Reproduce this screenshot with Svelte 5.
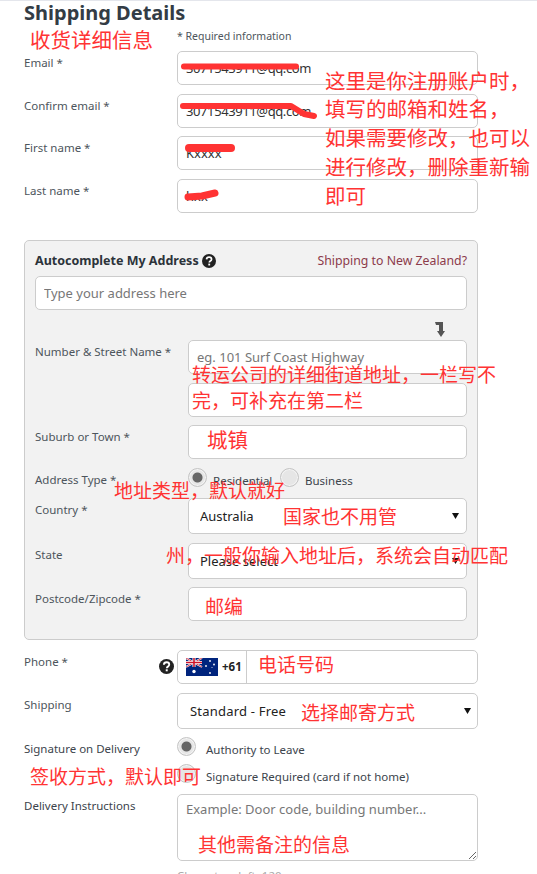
<script>
  const notes = [
    { text: '收货详细信息', x: 30, y: 39, big: true },
    { text: '这里是你注册账户时，', x: 325, y: 80, big: true },
    { text: '填写的邮箱和姓名，', x: 325, y: 108, big: true },
    { text: '如果需要修改，也可以', x: 325, y: 137, big: true },
    { text: '进行修改，删除重新输', x: 325, y: 166, big: true },
    { text: '即可', x: 325, y: 195, big: true },
    { text: '转运公司的详细街道地址，一栏写不', x: 192, y: 374 },
    { text: '完，可补充在第二栏', x: 192, y: 400 },
    { text: '城镇', x: 207, y: 439, big: true },
    { text: '地址类型，默认就好', x: 114, y: 490 },
    { text: '国家也不用管', x: 283, y: 516 },
    { text: '州，一般你输入地址后，系统会自动匹配', x: 166, y: 555 },
    { text: '邮编', x: 205, y: 606 },
    { text: '电话号码', x: 258, y: 664 },
    { text: '选择邮寄方式', x: 301, y: 712 },
    { text: '签收方式，默认即可', x: 30, y: 776 },
    { text: '其他需备注的信息', x: 198, y: 844 }
  ];
</script>

{#snippet help(size)}
  <svg class="help" width={size} height={size} viewBox="0 0 16 16">
    <circle cx="8" cy="8" r="8" fill="#222" />
    <path d="M5.2 6.1c.1-1.7 1.3-2.6 2.9-2.6 1.600 0 2.800 1 2.800 2.400 0 1.100-.6 1.700-1.400 2.200-.8.5-1.100.9-1.100 1.700" fill="none" stroke="#fff" stroke-width="2" />
    <rect x="7.200" y="11" width="2.100" height="2.100" fill="#fff" />
  </svg>
{/snippet}

<div class="page">
  <h1>Shipping Details</h1>
  <div class="row required"><span></span><span>* Required information</span></div>

  <div class="rows">
    <div class="row"><label for="email">Email *</label><input id="email" class="mail" value="3071543911@qq.com" /></div>
    <div class="row"><label for="confirm">Confirm email *</label><input id="confirm" class="mail" value="3071543911@qq.com" /></div>
    <div class="row"><label for="first">First name *</label><input id="first" value="Kxxxx" /></div>
    <div class="row"><label for="last">Last name *</label><input id="last" value="hxx" /></div>
  </div>

  <section class="box">
    <div class="box-head">
      <strong>Autocomplete My Address</strong>
      {@render help(14)}
      <span class="nz">Shipping to New Zealand?</span>
    </div>
    <input class="auto" placeholder="Type your address here" />
    <div class="arrow-row">
      <svg width="10" height="15" viewBox="0 0 10 15">
        <path d="M0 0h8v9h2l-4 6-4-6h2V3H1z" fill="#555" />
      </svg>
    </div>
    <div class="rows">
      <div class="row"><label for="street">Number &amp; Street Name *</label><input id="street" placeholder="eg. 101 Surf Coast Highway" /></div>
      <div class="row"><span></span><input aria-label="Street line two" /></div>
      <div class="row"><label for="suburb">Suburb or Town *</label><input id="suburb" /></div>
      <div class="row radios-row">
        <span class="lbl">Address Type *</span>
        <div class="inline-radios">
          <input type="radio" name="type" checked aria-label="Residential" /><span class="opt">Residential</span>
          <input type="radio" name="type" aria-label="Business" /><span class="opt">Business</span>
        </div>
      </div>
      <div class="row country"><label for="country">Country *</label><select id="country"><option>Australia</option></select></div>
      <div class="row"><label for="state">State</label><select id="state"><option>Please select</option></select></div>
      <div class="row"><label for="post">Postcode/Zipcode *</label><input id="post" /></div>
    </div>
  </section>

  <div class="rows lower">
    <div class="row">
      <div class="lbl phone-lbl"><span>Phone *</span>{@render help(15)}</div>
      <div class="phone">
        <div class="dial">
          <svg width="32" height="18" viewBox="0 0 32 18">
            <rect width="32" height="18" fill="#00247d" />
            <path d="M0 0l16 9M16 0L0 9" stroke="#fff" stroke-width="2" />
            <path d="M0 0l16 9M16 0L0 9" stroke="#cf142b" stroke-width="0.8" />
            <path d="M8 0v9M0 4.500h16" stroke="#fff" stroke-width="3" />
            <path d="M8 0v9M0 4.500h16" stroke="#cf142b" stroke-width="1.600" />
            <g fill="#fff">
              <circle cx="8" cy="13.500" r="1.700" />
              <circle cx="24" cy="3" r="0.900" />
              <circle cx="24" cy="15" r="0.900" />
              <circle cx="20" cy="8" r="0.900" />
              <circle cx="28" cy="6.500" r="0.900" />
              <circle cx="26" cy="9.500" r="0.500" />
            </g>
          </svg>
          <span>+61</span>
        </div>
      </div>
    </div>
    <div class="row"><label for="shipping">Shipping</label><select id="shipping" class="ship"><option>Standard - Free</option></select></div>
    <div class="row signature">
      <span class="lbl dark">Signature on Delivery</span>
      <div class="stack">
        <div class="radio-line"><input type="radio" name="sig" checked aria-label="Authority to Leave" /><span class="opt">Authority to Leave</span></div>
        <div class="radio-line"><input type="radio" name="sig" aria-label="Signature Required" /><span class="opt">Signature Required (card if not home)</span></div>
      </div>
    </div>
    <div class="row note">
      <label for="instr" class="dark">Delivery Instructions</label>
      <textarea id="instr" placeholder="Example: Door code, building number..."></textarea>
    </div>
    <div class="row chars"><span></span><span>Characters left: 120</span></div>
  </div>

  <svg class="scribble" width="537" height="240" viewBox="0 0 537 240">
    <g fill="none" stroke="#f33" stroke-linecap="round" stroke-linejoin="round">
      <path d="M184 66.500h112" stroke-width="6" />
      <path d="M183 106h108l13 8 10 2" stroke-width="6" />
      <path d="M189 148h42" stroke-width="8" />
      <path d="M188 197l14-1 13-3" stroke-width="7" />
    </g>
  </svg>

  {#each notes as note}
    <span class="note-text" class:big={note.big} style="left:{note.x}px;top:{note.y}px">{note.text}</span>
  {/each}
</div>

<style>
  :global(body) {
    margin: 0;
    overflow: hidden;
  }

  .page {
    position: relative;
    width: 537px;
    height: 874px;
    overflow: hidden;
    box-sizing: border-box;
    padding: 0 59px 0 24px;
    border-top: 1px solid #e4e6ec;
    background: #fff;
    font-family: "Noto Sans", Lato, sans-serif;
    font-size: 11.5px;
    line-height: 16px;
    color: #4d555c;
  }

  h1 {
    margin: 0;
    height: 24px;
    font-size: 20px;
    line-height: 24px;
    font-weight: 700;
    color: #333c45;
  }

  .rows {
    display: flex;
    flex-direction: column;
    gap: 8.5px;
  }

  .row {
    display: grid;
    grid-template-columns: 153px 1fr;
  }

  .required {
    height: 26px;
    padding-top: 3px;
    box-sizing: border-box;
    font-size: 10.5px;
  }

  label,
  .lbl {
    padding-top: 4px;
  }

  .dark {
    color: #3c444c;
  }

  input:not([type="radio"]),
  select,
  textarea {
    box-sizing: border-box;
    width: 100%;
    height: 34px;
    margin: 0;
    padding: 0 8px;
    border: 1px solid #ccc;
    border-radius: 5px;
    background-color: #fff;
    font-family: inherit;
    font-size: 13px;
    color: #333;
    outline: none;
  }

  input.mail {
    letter-spacing: -0.4px;
  }

  input::placeholder,
  textarea::placeholder {
    color: #777;
    opacity: 1;
  }

  select {
    appearance: none;
    height: 36px;
    padding-left: 11px;
    color: #222;
    background-image: url("data:image/svg+xml,%3Csvg xmlns='http://www.w3.org/2000/svg' width='7' height='6'%3E%3Cpath d='M0 0h7L3.500 6z' fill='%23111'/%3E%3C/svg%3E");
    background-repeat: no-repeat;
    background-position: right 7px center;
  }

  input[type="radio"] {
    appearance: none;
    box-sizing: border-box;
    flex: none;
    width: 19px;
    height: 19px;
    margin: 0;
    border: 1px solid #c4c4c4;
    border-radius: 50%;
    background: #e6e6e6;
    box-shadow: inset 0 0 0 1px #f4f4f4;
  }

  input[type="radio"]:checked {
    background: radial-gradient(circle, #666 0 4.500px, #e6e6e6 5.500px);
  }

  .box {
    box-sizing: border-box;
    margin-top: 27.5px;
    height: 400px;
    padding: 0 10px;
    border: 1px solid #ccc;
    border-radius: 5px;
    background: #f2f2f2;
  }

  .box-head {
    display: flex;
    align-items: center;
    gap: 3px;
    height: 20px;
    margin: 10px 0 5px;
  }

  .box-head strong {
    font-size: 12.5px;
    color: #2c333a;
  }

  .nz {
    margin-left: auto;
    font-size: 12.3px;
    color: #8c3b4b;
  }

  .arrow-row {
    display: flex;
    justify-content: flex-end;
    align-items: flex-start;
    height: 30px;
    padding: 12px 22px 0 0;
    box-sizing: border-box;
  }

  .inline-radios {
    display: flex;
    align-items: flex-start;
  }

  .opt {
    padding: 5px 0 0 6px;
    color: #3c444c;
  }

  .inline-radios .opt:first-of-type {
    width: 62px;
    padding-right: 5px;
  }

  .country {
    margin-top: 1px;
  }

  .lower {
    margin-top: 10px;
  }

  .phone-lbl {
    display: flex;
    justify-content: space-between;
    padding-right: 3px;
  }

  .phone-lbl .help {
    margin-top: 5px;
  }

  .phone {
    height: 34px;
    box-sizing: border-box;
    border: 1px solid #ccc;
    border-radius: 5px;
  }

  .dial {
    display: flex;
    align-items: center;
    gap: 4px;
    box-sizing: border-box;
    width: 69px;
    height: 100%;
    padding-left: 8px;
    border-right: 1px solid #ccc;
    color: #222;
    font-weight: 700;
  }

  .ship {
    padding-left: 12px;
    letter-spacing: 0.2px;
    background-position: right 6px center;
  }

  .stack {
    display: flex;
    flex-direction: column;
    gap: 5.500px;
  }

  .radio-line {
    display: flex;
    align-items: flex-start;
  }

  .radio-line .opt {
    padding-left: 10px;
  }

  .note {
    margin-top: 1px;
  }

  textarea {
    display: block;
    height: 67px;
    padding: 6px 8px;
    line-height: 16px;
    resize: both;
  }

  .chars {
    margin-top: -2px;
    color: #aaa;
  }

  .scribble {
    position: absolute;
    left: 0;
    top: -1px;
    pointer-events: none;
  }

  .note-text {
    position: absolute;
    transform: translateY(calc(-50% - 1px));
    font-family: "Noto Sans CJK SC", sans-serif;
    font-size: 19px;
    line-height: 28px;
    font-weight: 400;
    color: #f33;
    white-space: nowrap;
    pointer-events: none;
  }

  .note-text.big {
    font-size: 20.500px;
  }
</style>
